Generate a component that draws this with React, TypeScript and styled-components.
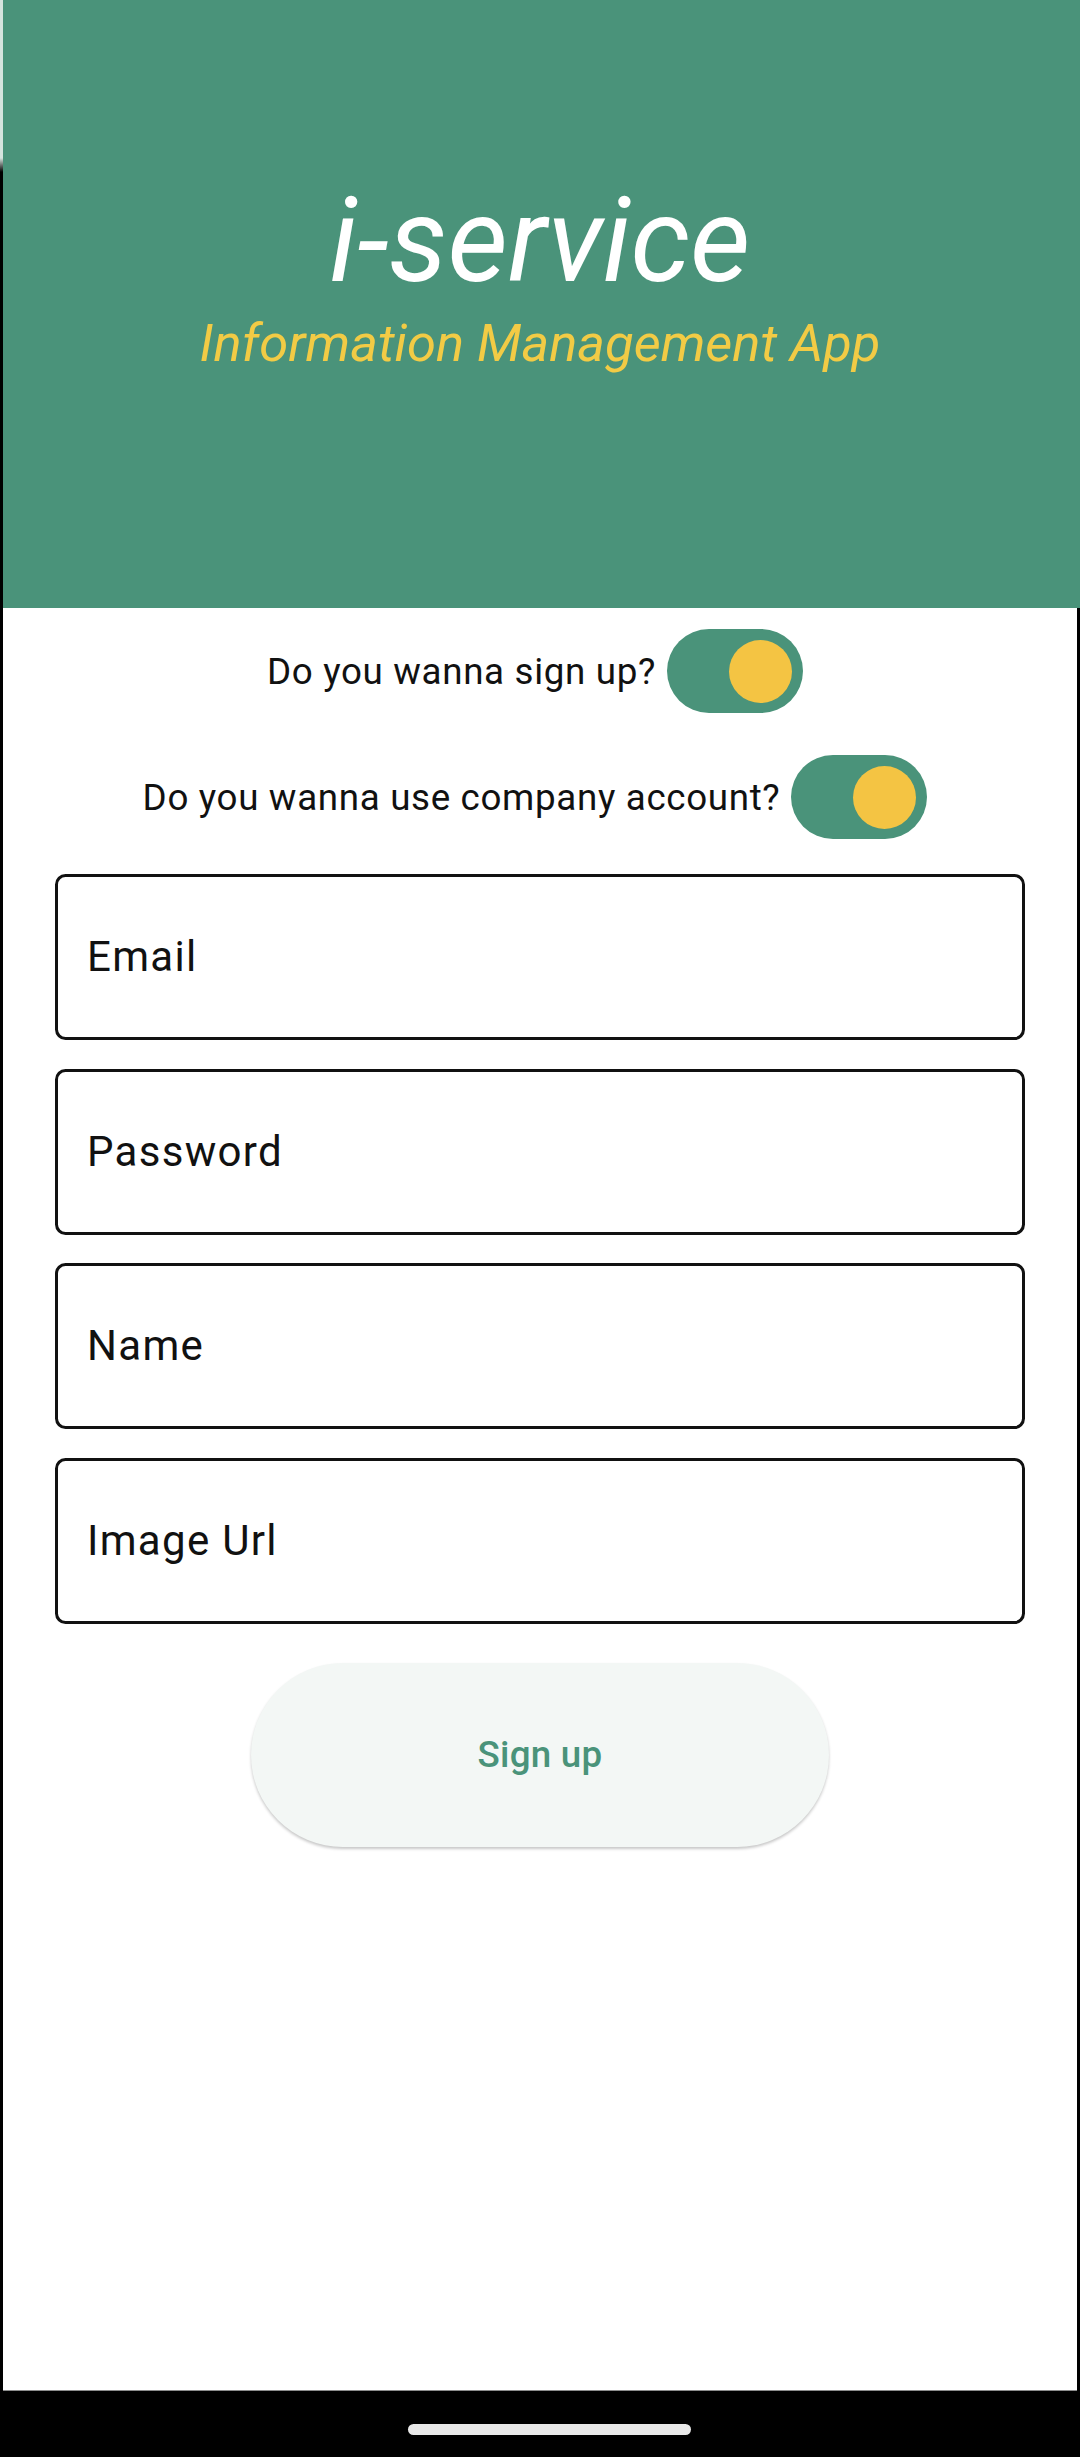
import React from "react";
import styled, { createGlobalStyle } from "styled-components";

const GREEN = "#4a937a";
const YELLOW = "#f4c443";

const Global = createGlobalStyle`
  html, body { margin: 0; padding: 0; background: #000; }
  body { font-family: Roboto, "Noto Sans", "Liberation Sans", sans-serif; }
  * { box-sizing: border-box; }
`;

const Frame = styled.div`
  width: 1080px;
  height: 2457px;
  display: flex;
  flex-direction: column;
  background:
    linear-gradient(to bottom, #d5e4de 0, #d5e4de 158px, #000 172px, #000 100%) left top / 3px 100% no-repeat,
    linear-gradient(${GREEN}, ${GREEN}) right top / 3px 608px no-repeat,
    #000;
  overflow: hidden;
`;

const Screen = styled.main`
  margin: 0 3px;
  height: 2391px;
  background: #fff;
  display: flex;
  flex-direction: column;
  align-items: center;
  border-bottom: 1px solid #8c8c8c;
`;

const Header = styled.header`
  align-self: stretch;
  height: 608px;
  background: ${GREEN};
  display: flex;
  flex-direction: column;
  align-items: center;
  padding-top: 183px;
`;

const Title = styled.h1`
  margin: 0;
  font-family: Roboto, sans-serif;
  font-style: italic;
  font-weight: 400;
  font-size: 117.5px;
  line-height: 1;
  color: #ffffff;
`;

const Subtitle = styled.p`
  margin: 16px 0 0;
  font-family: Roboto, sans-serif;
  font-style: italic;
  font-weight: 400;
  font-size: 52.5px;
  line-height: 1;
  letter-spacing: 0;
  color: #f2cb45;
`;

const ToggleRow = styled.div`
  height: 126px;
  display: flex;
  align-items: center;
  justify-content: center;
`;

const ToggleLabel = styled.span`
  font-family: Roboto, sans-serif;
  font-size: 36.75px;
  letter-spacing: 0.66px;
  color: #111;
`;

const SwitchWrap = styled.div`
  padding: 0 10.5px;
  display: flex;
  align-items: center;
`;

const Track = styled.div<{ $on: boolean }>`
  width: 136px;
  height: 84px;
  border-radius: 42px;
  background: ${(p) => (p.$on ? GREEN : "#e0e0e0")};
  display: flex;
  align-items: center;
  justify-content: ${(p) => (p.$on ? "flex-end" : "flex-start")};
  padding: 0 11px;
`;

const Thumb = styled.div`
  width: 63px;
  height: 63px;
  border-radius: 50%;
  background: ${YELLOW};
`;

const Form = styled.form`
  align-self: stretch;
  margin: 14px 52px 0;
  display: flex;
  flex-direction: column;
  gap: 28.67px;
`;

const Field = styled.div`
  height: 166px;
  border: 3px solid #111;
  border-radius: 10.5px;
  display: flex;
  align-items: center;
  padding: 0 29px;
`;

const FieldLabel = styled.span`
  font-family: Roboto, sans-serif;
  font-size: 42px;
  line-height: 1;
  letter-spacing: 1.3px;
  color: #111;
`;

const Button = styled.button`
  margin-top: 39px;
  width: 578px;
  height: 184px;
  border: none;
  border-radius: 92px;
  background: #f3f7f5;
  box-shadow: 0 2px 3px rgba(0, 0, 0, 0.22);
  font-family: Roboto, sans-serif;
  font-weight: 500;
  font-size: 36.75px;
  letter-spacing: 0.26px;
  color: ${GREEN};
  cursor: pointer;
`;

const NavBar = styled.div`
  flex: 1;
  background: #000;
  display: flex;
  justify-content: center;
  padding: 33px 0 0 19px;
`;

const HomePill = styled.div`
  width: 283px;
  height: 11px;
  border-radius: 6px;
  background: #e8e8e8;
`;

function Toggle({ label, on }: { label: string; on: boolean }) {
  return (
    <ToggleRow>
      <ToggleLabel>{label}</ToggleLabel>
      <SwitchWrap>
        <Track $on={on}>
          <Thumb />
        </Track>
      </SwitchWrap>
    </ToggleRow>
  );
}

const fields = ["Email", "Password", "Name", "Image Url"];

export default function App() {
  return (
    <>
      <Global />
      <Frame>
        <Screen>
          <Header>
            <Title>i-service</Title>
            <Subtitle>Information Management App</Subtitle>
          </Header>
          <Toggle label="Do you wanna sign up?" on />
          <Toggle label="Do you wanna use company account?" on />
          <Form onSubmit={(e) => e.preventDefault()}>
            {fields.map((f) => (
              <Field key={f}>
                <FieldLabel>{f}</FieldLabel>
              </Field>
            ))}
          </Form>
          <Button type="button">Sign up</Button>
        </Screen>
        <NavBar>
          <HomePill />
        </NavBar>
      </Frame>
    </>
  );
}
